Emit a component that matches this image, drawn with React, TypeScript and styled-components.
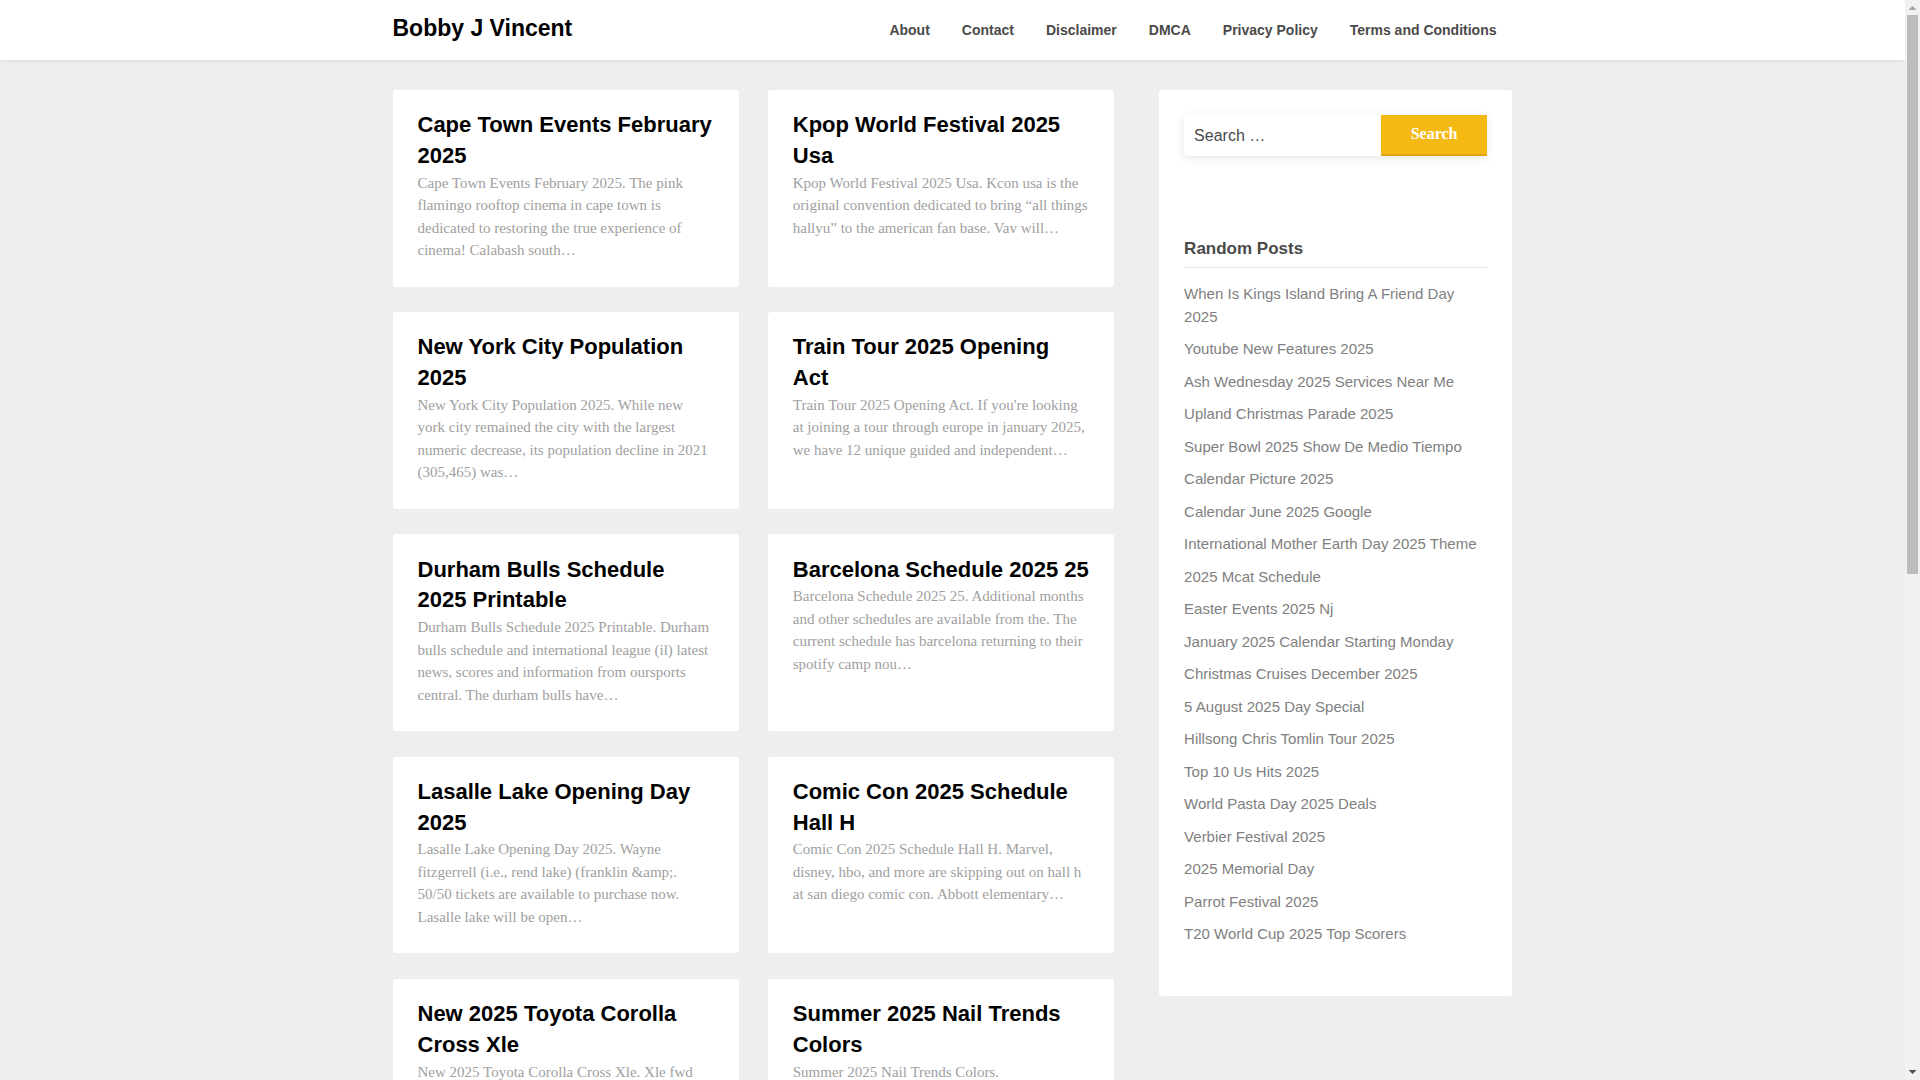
import React from "react";
import styled, { createGlobalStyle } from "styled-components";

const Global = createGlobalStyle`
  html, body { margin: 0; padding: 0; }
  body { background: #eeeeee; font-family: "Liberation Sans", Arial, sans-serif; color: #444; }
  * { box-sizing: border-box; }
`;

const Viewport = styled.div`
  display: flex;
  height: 100vh;
  overflow: hidden;
`;

const Page = styled.div`
  flex: 1;
  min-width: 0;
  overflow: hidden;
`;

const ScrollTrack = styled.div`
  flex: 0 0 15px;
  display: flex;
  flex-direction: column;
  align-items: center;
  background: #f1f1f1;
`;

const Arrow = styled.svg`
  flex: 0 0 auto;
  display: block;
`;

const ScrollThumb = styled.div`
  width: 11px;
  height: 559px;
  background: #bcbcbc;
`;

const TrackRest = styled.div`
  flex: 1;
`;

const Header = styled.header`
  height: 60px;
  background: #fff;
  box-shadow: 0 1px 3px rgba(0, 0, 0, 0.08);
`;

const Bar = styled.div`
  width: 1120px;
  height: 60px;
  margin: 0 auto;
  display: flex;
  align-items: center;
  justify-content: space-between;
`;

const SiteTitle = styled.a`
  font-size: 23px;
  font-weight: 700;
  color: #000;
  margin-top: -3px;
`;

const Nav = styled.nav`
  display: flex;
  gap: 32px;
  padding-right: 16px;
`;

const NavLink = styled.a`
  font-size: 14px;
  font-weight: 700;
  color: #4a4a4a;
`;

const Content = styled.div`
  width: 1120px;
  margin: 30px auto 0;
  display: flex;
  justify-content: space-between;
  align-items: flex-start;
`;

const Main = styled.main`
  width: 721.7px;
  display: grid;
  grid-template-columns: 48% 48%;
  column-gap: 4%;
  row-gap: 25.55px;
`;

const Card = styled.article`
  background: #fff;
  border-radius: 3px;
  padding: 20.15px 25px 24.95px;
`;

const CardTitle = styled.h2`
  margin: 0;
  font-size: 22px;
  line-height: 30.8px;
  font-weight: 700;
  color: #000;
`;

const Excerpt = styled.p`
  margin: 0;
  font-family: "Liberation Serif", "Times New Roman", serif;
  font-size: 15px;
  line-height: 22.5px;
  color: #a0a0a0;
`;

const Sidebar = styled.aside`
  width: 353px;
  margin-right: 0.4px;
  background: #fff;
  border-radius: 3px;
  padding: 25px 25px 50px;
`;

const SearchForm = styled.form`
  display: flex;
  height: 41px;
  border-radius: 3px;
  box-shadow: 0 2px 10px rgba(0, 0, 0, 0.1);
`;

const SearchInput = styled.input`
  flex: 1;
  min-width: 0;
  border: 0;
  outline: 0;
  padding: 0 10px;
  background: transparent;
  font-family: "Liberation Sans", Arial, sans-serif;
  font-size: 16px;
  color: #4a4a4a;
  &::placeholder { color: #4a4a4a; opacity: 1; }
`;

const SearchButton = styled.button`
  width: 106px;
  border: 0;
  border-bottom: 2px solid #dda510;
  background: #f5b914;
  color: #fff;
  font-family: "Liberation Serif", "Times New Roman", serif;
  font-size: 16px;
  font-weight: 700;
  padding: 0 0 2px;
`;

const WidgetTitle = styled.h3`
  margin: 82px 0 0;
  padding-bottom: 7px;
  border-bottom: 1px solid #e5e5e5;
  font-size: 17px;
  line-height: 22px;
  font-weight: 700;
  color: #4a4a4a;
`;

const PostList = styled.ul`
  list-style: none;
  margin: 15px 0 0;
  padding: 0;
  display: flex;
  flex-direction: column;
  gap: 10px;
`;

const PostLink = styled.li`
  font-size: 15px;
  line-height: 22.5px;
  color: #808080;
`;

const articles = [
  ["Cape Town Events February 2025", "Cape Town Events February 2025. The pink flamingo rooftop cinema in cape town is dedicated to restoring the true experience of cinema! Calabash south…"],
  ["Kpop World Festival 2025 Usa", "Kpop World Festival 2025 Usa. Kcon usa is the original convention dedicated to bring “all things hallyu” to the american fan base. Vav will…"],
  ["New York City Population 2025", "New York City Population 2025. While new york city remained the city with the largest numeric decrease, its population decline in 2021 (305,465) was…"],
  ["Train Tour 2025 Opening Act", "Train Tour 2025 Opening Act. If you're looking at joining a tour through europe in january 2025, we have 12 unique guided and independent…"],
  ["Durham Bulls Schedule 2025 Printable", "Durham Bulls Schedule 2025 Printable. Durham bulls schedule and international league (il) latest news, scores and information from oursports central. The durham bulls have…"],
  ["Barcelona Schedule 2025 25", "Barcelona Schedule 2025 25. Additional months and other schedules are available from the. The current schedule has barcelona returning to their spotify camp nou…"],
  ["Lasalle Lake Opening Day 2025", "Lasalle Lake Opening Day 2025. Wayne fitzgerrell (i.e., rend lake) (franklin &amp;. 50/50 tickets are available to purchase now. Lasalle lake will be open…"],
  ["Comic Con 2025 Schedule Hall H", "Comic Con 2025 Schedule Hall H. Marvel, disney, hbo, and more are skipping out on hall h at san diego comic con. Abbott elementary…"],
  ["New 2025 Toyota Corolla Cross Xle", "New 2025 Toyota Corolla Cross Xle. Xle fwd"],
  ["Summer 2025 Nail Trends Colors", "Summer 2025 Nail Trends Colors."],
];

const posts = [
  "When Is Kings Island Bring A Friend Day 2025",
  "Youtube New Features 2025",
  "Ash Wednesday 2025 Services Near Me",
  "Upland Christmas Parade 2025",
  "Super Bowl 2025 Show De Medio Tiempo",
  "Calendar Picture 2025",
  "Calendar June 2025 Google",
  "International Mother Earth Day 2025 Theme",
  "2025 Mcat Schedule",
  "Easter Events 2025 Nj",
  "January 2025 Calendar Starting Monday",
  "Christmas Cruises December 2025",
  "5 August 2025 Day Special",
  "Hillsong Chris Tomlin Tour 2025",
  "Top 10 Us Hits 2025",
  "World Pasta Day 2025 Deals",
  "Verbier Festival 2025",
  "2025 Memorial Day",
  "Parrot Festival 2025",
  "T20 World Cup 2025 Top Scorers",
];

const navItems = ["About", "Contact", "Disclaimer", "DMCA", "Privacy Policy", "Terms and Conditions"];

export default function App() {
  return (
    <Viewport>
      <Global />
      <Page>
        <Header>
          <Bar>
            <SiteTitle>Bobby J Vincent</SiteTitle>
            <Nav>
              {navItems.map((n) => (
                <NavLink key={n}>{n}</NavLink>
              ))}
            </Nav>
          </Bar>
        </Header>
        <Content>
          <Main>
            {articles.map(([t, e]) => (
              <Card key={t}>
                <CardTitle>{t}</CardTitle>
                <Excerpt>{e}</Excerpt>
              </Card>
            ))}
          </Main>
          <Sidebar>
            <SearchForm onSubmit={(e) => e.preventDefault()}>
              <SearchInput placeholder="Search …" />
              <SearchButton>Search</SearchButton>
            </SearchForm>
            <WidgetTitle>Random Posts</WidgetTitle>
            <PostList>
              {posts.map((p) => (
                <PostLink key={p}>{p}</PostLink>
              ))}
            </PostList>
          </Sidebar>
        </Content>
      </Page>
      <ScrollTrack>
        <Arrow width="15" height="15" viewBox="0 0 15 15">
          <path d="M7.5 6L11.5 10H3.5Z" fill="#a3a3a3" />
        </Arrow>
        <ScrollThumb />
        <TrackRest />
        <Arrow width="15" height="15" viewBox="0 0 15 15">
          <path d="M3.5 5H11.5L7.5 9Z" fill="#505050" />
        </Arrow>
      </ScrollTrack>
    </Viewport>
  );
}
